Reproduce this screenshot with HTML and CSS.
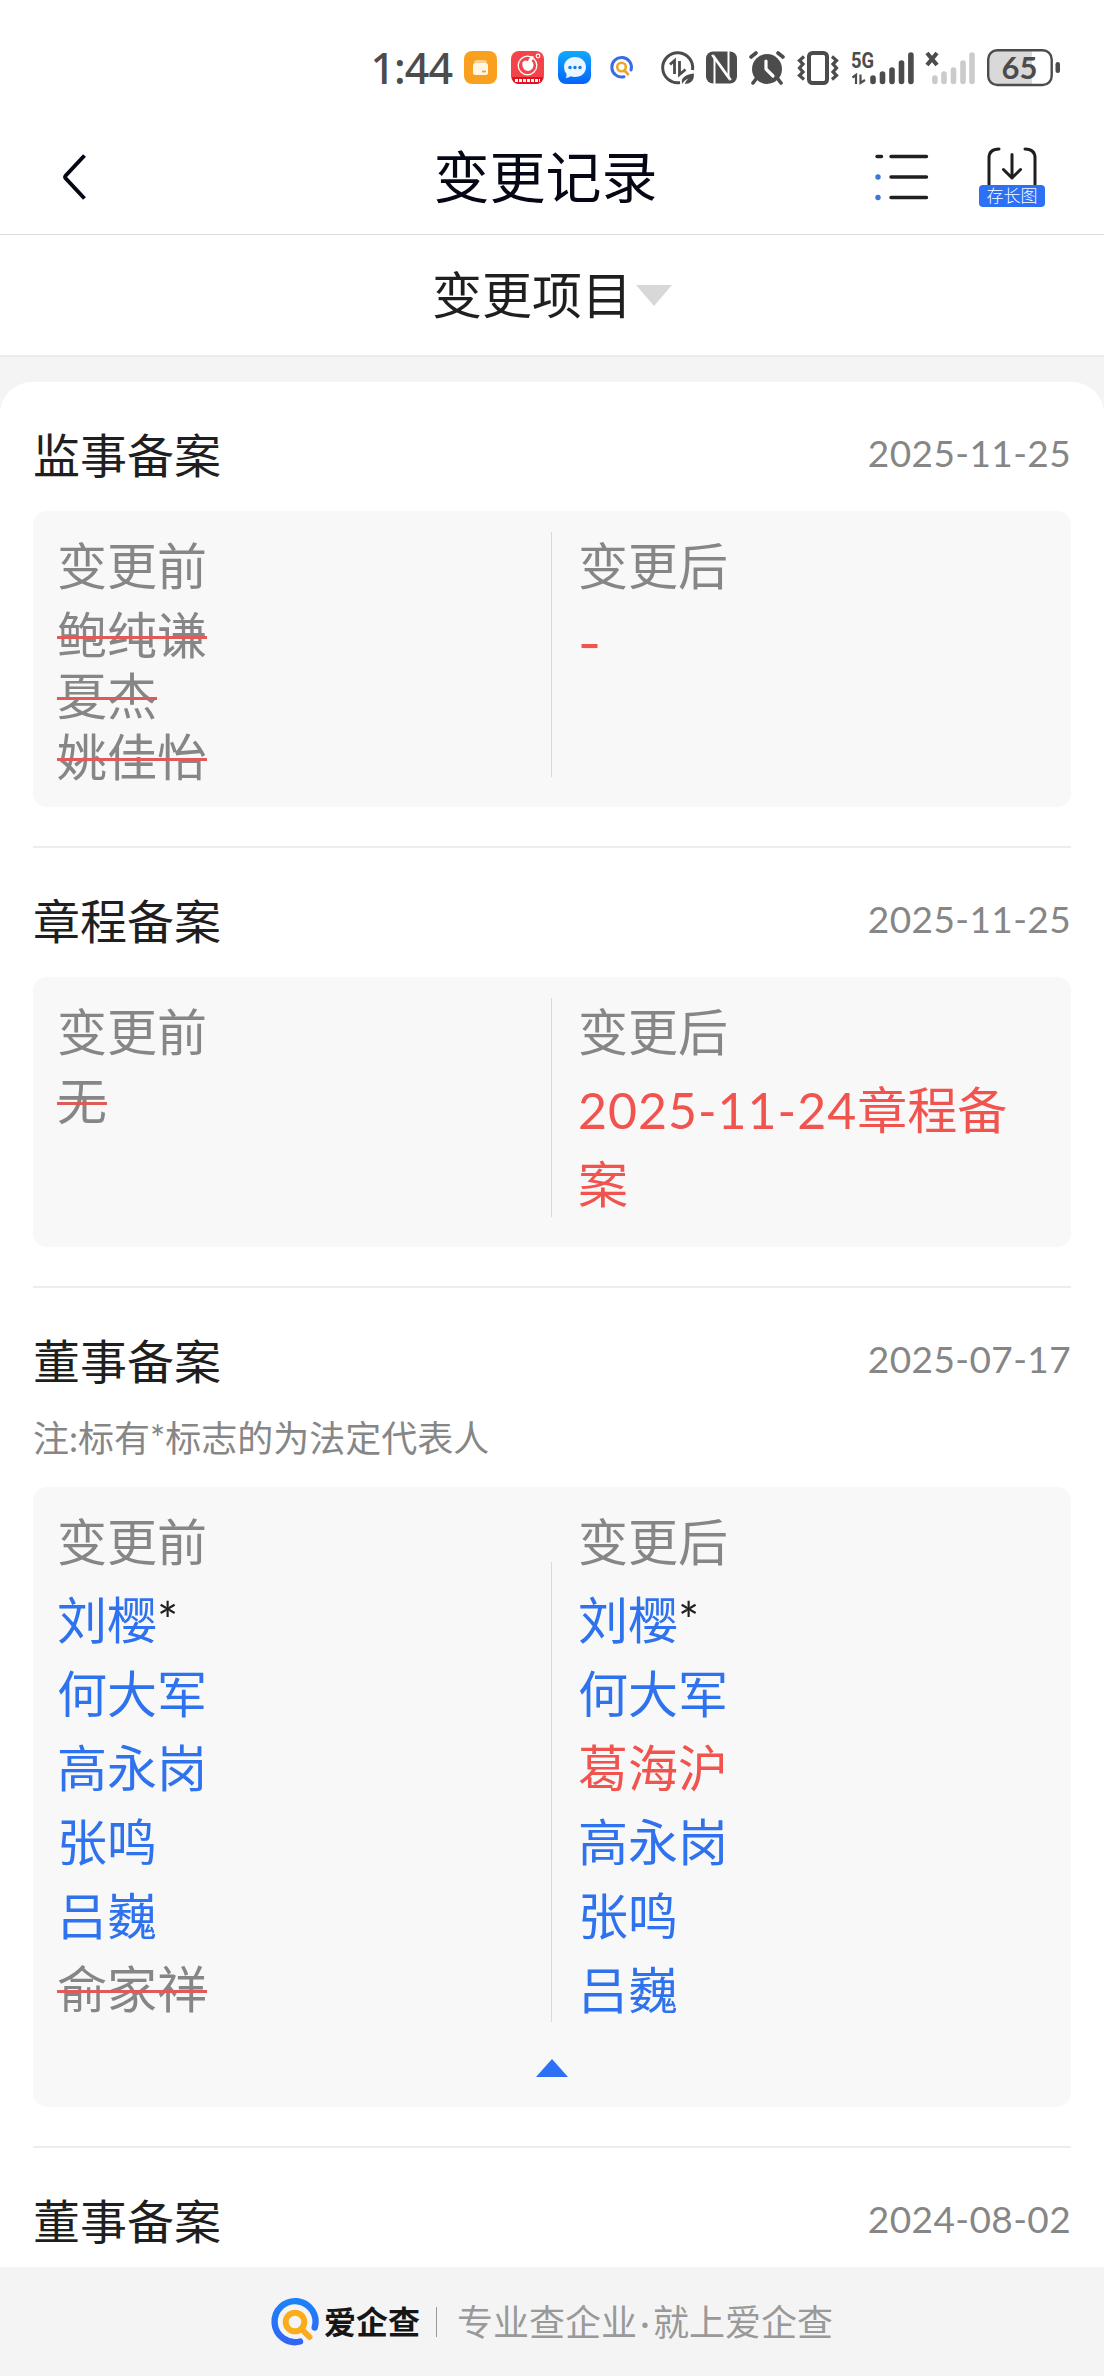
FILE: index.html
```html
<!DOCTYPE html>
<html lang="zh-CN">
<head>
  <meta charset="UTF-8">
  <title>变更记录</title>
  <link rel="stylesheet" href="styles.css">
</head>
<body>
  <!-- 状态栏 -->
  <div class="status-bar">
    <span class="clock">1:44</span>
    <div class="status-icons">
      <svg class="app-icon" width="33" height="33" viewBox="0 0 33 33">
        <rect width="33" height="33" rx="8" fill="#f9a01f"/>
        <path d="M10 12 Q10 9 13 9 H20 Q23 9 23 12 Z" fill="#fdd08d"/>
        <rect x="9" y="12" width="15" height="12" rx="2.5" fill="#fff6e6"/>
        <path d="M18 20.5 H22" stroke="#f9a01f" stroke-width="1.8"/>
      </svg>
      <svg class="app-icon" width="33" height="33" viewBox="0 0 33 33">
        <rect width="33" height="33" rx="8" fill="#f5434a"/>
        <circle cx="16.5" cy="14.5" r="9.3" fill="none" stroke="#fff" stroke-width="1.3"/>
        <path d="M11.5 11 Q14 8.500 17 10 Q19 5 22.500 5 Q23 8 20.500 10 Q24 13 21.500 17.500 Q19 21 15 19.500 Q10.500 17.500 11.500 11 Z" fill="#fff"/>
        <circle cx="27" cy="5" r="1.8" fill="none" stroke="#fff" stroke-width="1.2"/>
        <path d="M1 26 H32 Q31.500 33 25 33 H8 Q1.500 33 1 26 Z" fill="#e5101f"/>
        <path d="M4 29.500 H29" stroke="#fff" stroke-width="3" stroke-dasharray="3 1"/>
      </svg>
      <svg class="app-icon" width="33" height="33" viewBox="0 0 33 33">
        <defs>
          <linearGradient id="msgBg" x1="0" y1="0" x2="0" y2="1">
            <stop offset="0" stop-color="#12a9fb"/>
            <stop offset="1" stop-color="#0563fb"/>
          </linearGradient>
        </defs>
        <rect width="33" height="33" rx="8" fill="url(#msgBg)"/>
        <path d="M17 6 C23.500 6 28 10.500 28 16 C28 22 23.500 26 17 26 Q14.500 26 12.500 25.300 Q10.500 27 7.500 27 Q9 25 8.500 23 Q6 20 6 16 C6 10.500 10.500 6 17 6 Z" fill="#e9f5ff"/>
        <circle cx="12" cy="16.500" r="1.7" fill="#1478e8"/>
        <circle cx="17" cy="16.500" r="1.7" fill="#1478e8"/>
        <circle cx="22" cy="16.500" r="1.7" fill="#1478e8"/>
      </svg>
      <svg class="icon-aqc" width="23" height="23" viewBox="0 0 23 23" fill="none" stroke-linecap="round">
        <path d="M14 20.700 A9.800 9.800 0 1 1 21 14" stroke="#3a6be8" stroke-width="3"/>
        <circle cx="11.500" cy="11" r="4.300" stroke="#eda62c" stroke-width="2.600"/>
        <path d="M15 15 L18 18.300" stroke="#eda62c" stroke-width="2.800"/>
      </svg>
      <svg class="icon-data" width="34" height="34" viewBox="0 0 34 34" fill="none" stroke="#4c4c4c">
        <path d="M19 31.500 A15 15 0 1 1 31.500 19" stroke-width="3"/>
        <path d="M9 13.500 L13.500 9.500 V23 M18.500 10 V23.500 L24.500 18.500" stroke-width="2.800"/>
        <path d="M21 33 Q19 24 33 22.500 Q33.500 33 24 33 Q24.500 29.500 28 27.500 Q23.500 28.500 21 33 Z" fill="#4c4c4c" stroke="none"/>
      </svg>
      <svg class="icon-nfc" width="31" height="33" viewBox="0 0 31 33">
        <rect x="0" y="0.500" width="31" height="32" rx="7" fill="#4c4c4c"/>
        <path d="M8.500 33 V6 L25 29" fill="none" stroke="#fff" stroke-width="2"/>
        <path d="M22.500 0 V27 L6 4" fill="none" stroke="#fff" stroke-width="2"/>
      </svg>
      <svg class="icon-alarm" width="36" height="34" viewBox="0 0 36 34" fill="none" stroke="#4c4c4c" stroke-linecap="round">
        <circle cx="18" cy="18" r="15" fill="#4c4c4c" stroke="none"/>
        <path d="M2 6 L7 2 M29 2 L34 6" stroke-width="3.600"/>
        <path d="M7 28 L4 32 M29 28 L32 32" stroke-width="3.600"/>
        <path d="M17 10 V18 L24 25" stroke="#fff" stroke-width="3.200" stroke-linejoin="round"/>
      </svg>
      <svg class="icon-vibrate" width="42" height="34" viewBox="0 0 42 34" fill="none" stroke="#4c4c4c">
        <rect x="12" y="2" width="18" height="30" rx="3.500" stroke-width="4"/>
        <path d="M7 5.500 L2.500 9.500 L6 13 L2.500 17 L6 21 L2.500 24.500 L7 28.500" stroke-width="3.200"/>
        <path d="M35 5.500 L39.500 9.500 L36 13 L39.500 17 L36 21 L39.500 24.500 L35 28.500" stroke-width="3.200"/>
      </svg>
      <svg class="icon-signal" width="63" height="34" viewBox="0 0 63 34">
        <text x="0" y="17" class="net-type" textLength="23" lengthAdjust="spacingAndGlyphs">5G</text>
        <path d="M1.500 26.500 L5 24 V33 M9.500 23.500 V32 L14 29" fill="none" stroke="#4c4c4c" stroke-width="2.200"/>
        <g stroke="#4c4c4c" stroke-width="5.600" stroke-linecap="round">
          <path d="M22 27 V30.500 M31.500 23 V30.500 M41 19 V30.500 M50.500 12 V30.500 M59.900 4 V30.500"/>
        </g>
      </svg>
      <svg class="icon-nosignal" width="50" height="34" viewBox="0 0 50 34">
        <path d="M2 2 L12 14 M12 2 L2 14" stroke="#4c4c4c" stroke-width="4.200"/>
        <g stroke="#cbcbcb" stroke-width="5.600" stroke-linecap="round">
          <path d="M9.900 27 V30.500 M19 23 V30.500 M28.500 19 V30.500 M38 12 V30.500 M47 4 V30.500"/>
        </g>
      </svg>
      <svg class="icon-battery" width="74" height="38" viewBox="0 0 74 38">
        <path d="M10 2 H45 V36 H10 Q2 36 2 28 V10 Q2 2 10 2 Z" fill="#d9d9d9"/>
        <rect x="1.200" y="1.200" width="63.500" height="34.800" rx="9" fill="none" stroke="#4c4c4c" stroke-width="2.400"/>
        <rect x="68.500" y="13" width="4.500" height="11" rx="2.200" fill="#4c4c4c"/>
        <text x="32.500" y="30" class="battery-text" text-anchor="middle">65</text>
      </svg>
    </div>
  </div>

  <!-- 标题栏 -->
  <header class="nav-bar">
    <svg class="back" width="26" height="48" viewBox="0 0 26 48">
      <path d="M22.500 2.500 L3.800 22.500 Q2.500 24 3.800 25.500 L22.500 45.500" fill="none" stroke="#050714" stroke-width="4"/>
    </svg>
    <h1 class="nav-title">变更记录</h1>
    <div class="nav-actions">
      <svg width="54" height="46" viewBox="0 0 54 46" stroke="#1f1f1f" stroke-width="3.400" stroke-linecap="round">
        <path d="M2 2.500 H6.500 M16 2.500 H51.500 M16 23 H51.500 M16 43.500 H51.500"/>
        <circle cx="3" cy="23" r="2.700" fill="#3b76d8" stroke="none"/>
        <circle cx="3" cy="43.500" r="2.700" fill="#3b76d8" stroke="none"/>
      </svg>
      <div class="save-img">
        <svg width="50" height="38" viewBox="0 0 50 38" fill="none" stroke="#1f1f1f" stroke-width="3" stroke-linecap="round" stroke-linejoin="round">
          <path d="M2 40 V11 Q2 2 12 2 M38 2 Q48 2 48 11 V40"/>
          <path d="M25 7.500 V31 M16.500 22.500 L25 31 L33.500 22.500"/>
        </svg>
        <span class="save-label">存长图</span>
      </div>
    </div>
  </header>

  <!-- 筛选 -->
  <div class="filter">
    <span>变更项目</span>
    <i class="arrow-down"></i>
  </div>

  <!-- 变更列表 -->
  <main class="list">
    <section class="record">
      <div class="record-head">
        <h2>监事备案</h2>
        <time>2025-11-25</time>
      </div>
      <div class="compare">
        <div class="col">
          <p class="label">变更前</p>
          <p class="item removed">鲍纯谦</p>
          <p class="item removed">夏杰</p>
          <p class="item removed">姚佳怡</p>
        </div>
        <div class="divider"></div>
        <div class="col after">
          <p class="label">变更后</p>
          <p class="item added empty">-</p>
        </div>
      </div>
    </section>

    <section class="record">
      <div class="record-head">
        <h2>章程备案</h2>
        <time>2025-11-25</time>
      </div>
      <div class="compare">
        <div class="col">
          <p class="label">变更前</p>
          <p class="item removed">无</p>
        </div>
        <div class="divider"></div>
        <div class="col after">
          <p class="label">变更后</p>
          <p class="item added"><span class="num">2025-11-24</span>章程备案</p>
        </div>
      </div>
    </section>

    <section class="record">
      <div class="record-head">
        <h2>董事备案</h2>
        <time>2025-07-17</time>
      </div>
      <p class="note">注:标有*标志的为法定代表人</p>
      <div class="compare people">
        <div class="col">
          <p class="label">变更前</p>
          <p class="item"><a>刘樱</a>*</p>
          <p class="item"><a>何大军</a></p>
          <p class="item"><a>高永岗</a></p>
          <p class="item"><a>张鸣</a></p>
          <p class="item"><a>吕巍</a></p>
          <p class="item removed">俞家祥</p>
        </div>
        <div class="divider"></div>
        <div class="col after">
          <p class="label">变更后</p>
          <p class="item"><a>刘樱</a>*</p>
          <p class="item"><a>何大军</a></p>
          <p class="item added">葛海沪</p>
          <p class="item"><a>高永岗</a></p>
          <p class="item"><a>张鸣</a></p>
          <p class="item"><a>吕巍</a></p>
        </div>
        <div class="fold"><i class="arrow-up"></i></div>
      </div>
    </section>

    <section class="record">
      <div class="record-head">
        <h2>董事备案</h2>
        <time>2024-08-02</time>
      </div>
    </section>
  </main>

  <!-- 底部品牌 -->
  <footer class="brand">
    <svg class="brand-logo" width="48" height="48" viewBox="0 0 48 48" fill="none" stroke-linecap="round">
      <defs>
        <linearGradient id="ring" x1="0" y1="0" x2="0" y2="1">
          <stop offset="0" stop-color="#1b82f8"/>
          <stop offset="1" stop-color="#3265f6"/>
        </linearGradient>
      </defs>
      <path d="M29 43.500 A20.500 20.500 0 1 1 43.700 29.500" stroke="url(#ring)" stroke-width="6.400"/>
      <circle cx="24" cy="24" r="9.300" stroke="#fbab1c" stroke-width="6"/>
      <path d="M31.500 32 L38.500 39" stroke="#fbab1c" stroke-width="6"/>
    </svg>
    <span class="brand-name">爱企查</span>
    <span class="brand-line"></span>
    <span class="slogan">专业查企业<i class="dot">·</i>就上爱企查</span>
  </footer>
</body>
</html>
```

FILE: styles.css
```css
* {
  box-sizing: border-box;
  margin: 0;
  padding: 0;
}
body {
  width: 1104px;
  height: 2376px;
  overflow: hidden;
  display: flex;
  flex-direction: column;
  background-color: #f4f4f4;
  color: #1f1f1f;
  font-family: Lato, "Noto Sans CJK SC", sans-serif;
}
svg {
  display: block;
  flex: none;
  overflow: visible;
}

/* 状态栏 */
.status-bar {
  height: 120px;
  padding: 15px 43px 0 0;
  background-color: #fff;
  display: flex;
  align-items: center;
  justify-content: flex-end;
  color: #4c4c4c;
}
.clock {
  font-family: "Noto Sans", sans-serif;
  font-size: 43px;
  font-weight: 500;
  line-height: 50px;
  letter-spacing: -1px;
  margin: 0 12px 0 0;
}
.status-icons {
  display: flex;
  align-items: center;
}
.app-icon {
  margin-right: 14px;
}
.icon-aqc {
  margin: 0 28px 0 5px;
}
.icon-nfc,
.icon-alarm,
.icon-vibrate,
.icon-nosignal {
  margin-right: 12px;
}
.icon-data,
.icon-signal {
  margin-right: 11px;
}
.net-type {
  font-family: Roboto, sans-serif;
  font-size: 22px;
  font-weight: 700;
  fill: #4c4c4c;
}
.battery-text {
  font-family: Lato, sans-serif;
  font-size: 31px;
  font-weight: 700;
  fill: #4c4c4c;
}

/* 标题栏 */
.nav-bar {
  height: 115px;
  padding: 0 59px 0 62px;
  background-color: #fff;
  border-bottom: 1px solid #dedede;
  display: grid;
  grid-template-columns: 1fr auto 1fr;
  align-items: center;
}
.nav-title {
  font-size: 56px;
  line-height: 80px;
  font-weight: 400;
  color: #050714;
  margin-right: 16px;
}
.nav-actions {
  display: flex;
  justify-content: flex-end;
  align-items: center;
  gap: 50px;
}
.save-img {
  display: flex;
  flex-direction: column;
  align-items: center;
}
.save-label {
  width: 66px;
  height: 22px;
  border-radius: 4px;
  background-color: #2b70f5;
  color: #fff;
  font-size: 17px;
  font-weight: 300;
  line-height: 21px;
  text-align: center;
}

/* 筛选 */
.filter {
  height: 122px;
  background-color: #fff;
  border-bottom: 2px solid #ededed;
  display: flex;
  align-items: center;
  justify-content: center;
  gap: 4px;
  font-size: 50px;
  line-height: 70px;
}
.arrow-down {
  border: 18px solid transparent;
  border-top: 21px solid #d8d8d8;
  border-bottom: 0;
}

/* 列表 */
.list {
  flex: 1;
  min-height: 0;
  overflow: hidden;
  margin-top: 25px;
  padding: 0 33px;
  background-color: #fff;
  border-radius: 32px 32px 0 0;
}
.record {
  padding: 40px 0 39px;
  border-bottom: 2px solid #ededed;
}
.record-head {
  display: flex;
  justify-content: space-between;
  height: 89px;
}
.record-head h2 {
  font-size: 47px;
  line-height: 66px;
  font-weight: 400;
}
.record-head time {
  font-size: 37px;
  line-height: 61px;
  letter-spacing: 0.4px;
  color: #868686;
}
.note {
  height: 70px;
  font-size: 36px;
  line-height: 42px;
  color: #868686;
}

/* 变更前 / 变更后 */
.compare {
  display: grid;
  grid-template-columns: 518px 1px 1fr;
  background-color: #f8f8f8;
  border-radius: 14px;
  font-size: 50px;
}
.col {
  padding: 20px 24px 19px;
}
.col.after {
  padding: 20px 50px 26px 26px;
}
.divider {
  background-color: #d9d9d9;
  margin: 21px 0 30px;
}
.label {
  line-height: 71px;
  margin-bottom: 5px;
  color: #868686;
}
.item {
  line-height: 74px;
}
.item a {
  color: #2f72ee;
}
.item.added {
  color: #f1534f;
}
.item.empty {
  font-family: Inter, sans-serif;
}
.num {
  letter-spacing: 1px;
}
.item.removed {
  width: fit-content;
  line-height: 61px;
  color: #868686;
  text-decoration: line-through #e05a58 3px;
}
.label + .item.removed {
  margin-top: -2px;
}
.people .col,
.people .col.after {
  padding-bottom: 0;
}
.people .divider {
  margin: 75px 0 5px;
}
.people .item.removed {
  line-height: 72px;
}
.fold {
  grid-column: 1 / -1;
  height: 80px;
  display: flex;
  justify-content: center;
  padding-top: 32px;
}
.arrow-up {
  height: 0;
  border: 16px solid transparent;
  border-bottom: 18px solid #2b70f5;
  border-top: 0;
}

/* 底部品牌 */
.brand {
  height: 109px;
  background-color: #f4f4f4;
  display: flex;
  align-items: center;
  justify-content: center;
}
.brand-name {
  margin-left: 5px;
  font-size: 32px;
  font-weight: 700;
  line-height: 40px;
  color: #161616;
}
.brand-line {
  width: 1px;
  height: 30px;
  margin: 0 20px 0 16px;
  background-color: #999;
}
.slogan {
  font-size: 36px;
  line-height: 48px;
  color: #999;
}
.dot {
  display: inline-block;
  width: 16px;
  text-align: center;
  font-style: normal;
}
```
